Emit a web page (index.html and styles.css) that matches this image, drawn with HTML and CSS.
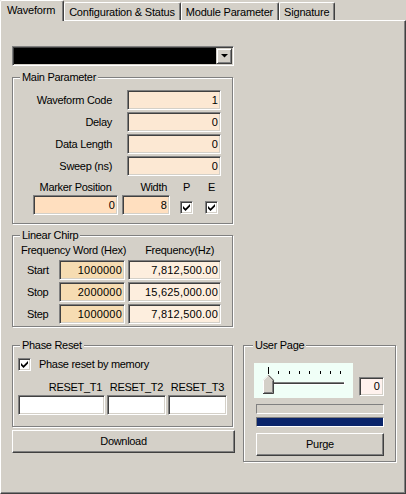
FILE: index.html
```html
<!DOCTYPE html>
<html>
<head>
<meta charset="utf-8">
<link rel="stylesheet" href="styles.css">
</head>
<body>
<div class="tabs">
  <div class="tab active">Waveform</div>
  <div class="tab">Configuration &amp; Status</div>
  <div class="tab">Module Parameter</div>
  <div class="tab">Signature</div>
</div>
<div class="panel">
  <div class="column">
    <div class="combo">
      <div class="combo-btn"><svg width="7" height="4" viewBox="0 0 7 4"><polygon points="0,0 7,0 3.5,3.6" fill="#000"/></svg></div>
    </div>

    <div class="group main">
      <span class="group-title">Main Parameter</span>
      <div class="param-grid">
        <span class="lbl">Waveform Code</span><div class="field f-param">1</div>
        <span class="lbl">Delay</span><div class="field f-param">0</div>
        <span class="lbl">Data Length</span><div class="field f-param">0</div>
        <span class="lbl">Sweep (ns)</span><div class="field f-param">0</div>
      </div>
      <div class="marker-grid">
        <span class="mk-lbl">Marker Position</span>
        <span class="w-lbl">Width</span>
        <span class="cb-lbl">P</span>
        <span class="cb-lbl">E</span>
        <div class="field f-marker">0</div>
        <div class="field f-marker w-field">8</div>
        <div class="check cb-cell"><svg width="7" height="7" viewBox="0 0 7 7"><polygon points="0,2 2.5,4.5 7,0 7,2.5 2.5,7 0,4.5" fill="#000"/></svg></div>
        <div class="check cb-cell"><svg width="7" height="7" viewBox="0 0 7 7"><polygon points="0,2 2.5,4.5 7,0 7,2.5 2.5,7 0,4.5" fill="#000"/></svg></div>
      </div>
    </div>

    <div class="group chirp">
      <span class="group-title">Linear Chirp</span>
      <div class="chirp-grid">
        <span class="h-word">Frequency Word (Hex)</span>
        <span class="h-freq">Frequency(Hz)</span>
        <span class="row-lbl">Start</span><div class="field f-word">1000000</div><div class="field f-freq">7,812,500.00</div>
        <span class="row-lbl">Stop</span><div class="field f-word">2000000</div><div class="field f-freq">15,625,000.00</div>
        <span class="row-lbl">Step</span><div class="field f-word">1000000</div><div class="field f-freq">7,812,500.00</div>
      </div>
    </div>
  </div>

  <div class="bottom-row">
    <div class="bottom-left">
      <div class="group phase">
        <span class="group-title">Phase Reset</span>
        <div class="check-row">
          <div class="check"><svg width="7" height="7" viewBox="0 0 7 7"><polygon points="0,2 2.5,4.5 7,0 7,2.5 2.5,7 0,4.5" fill="#000"/></svg></div>
          <span>Phase reset by memory</span>
        </div>
        <div class="reset-grid">
          <span class="r-lbl">RESET_T1</span>
          <span class="r-lbl">RESET_T2</span>
          <span class="r-lbl">RESET_T3</span>
          <div class="field f-white"></div>
          <div class="field f-white"></div>
          <div class="field f-white"></div>
        </div>
      </div>
      <div class="btn download">Download</div>
    </div>

    <div class="group userpage">
      <span class="group-title">User Page</span>
      <div class="slider-row">
        <svg class="slider" width="99" height="35" viewBox="0 0 99 35">
          <rect width="99" height="35" fill="#f0fff7"/>
          <g stroke="#000" stroke-width="1">
            <line x1="14.5" y1="4" x2="14.5" y2="11"/>
            <line x1="24.5" y1="8" x2="24.5" y2="11"/>
            <line x1="35.5" y1="8" x2="35.5" y2="11"/>
            <line x1="45.5" y1="8" x2="45.5" y2="11"/>
            <line x1="55.5" y1="8" x2="55.5" y2="11"/>
            <line x1="66.5" y1="8" x2="66.5" y2="11"/>
            <line x1="76.5" y1="8" x2="76.5" y2="11"/>
            <line x1="86.5" y1="8" x2="86.5" y2="11"/>
          </g>
          <rect x="10" y="19" width="80" height="1" fill="#808080"/>
          <rect x="10" y="20" width="80" height="1" fill="#404040"/>
          <rect x="10" y="21" width="81" height="1" fill="#ffffff"/>
          <rect x="90" y="19" width="1" height="3" fill="#ffffff"/>
          <path d="M9 31 V17 L14.5 11.5 L20 17 V31 Z" fill="#d4d0c8"/>
          <path d="M9.5 30.5 V17.2 L14.5 12.2" stroke="#fff" fill="none"/>
          <path d="M14.5 12.2 L19.5 17.2 V30.5 H9" stroke="#404040" fill="none"/>
          <path d="M18.5 17.6 V29.5 H10" stroke="#808080" fill="none"/>
        </svg>
        <div class="field f-num">0</div>
      </div>
      <div class="progress"></div>
      <div class="progress filled"></div>
      <div class="btn purge">Purge</div>
    </div>
  </div>
</div>
</body>
</html>
```

FILE: styles.css
```css
* { box-sizing: border-box; }
html, body { margin: 0; padding: 0; }
body {
  width: 406px;
  height: 494px;
  overflow: hidden;
  background: #d4d0c8;
  color: #000;
  font-family: "Liberation Sans", Arial, sans-serif;
  font-size: 11px;
  line-height: 13px;
  letter-spacing: -0.3px;
}

/* tabs */
.tabs {
  position: relative;
  z-index: 2;
  display: flex;
  align-items: flex-start;
  height: 20px;
  letter-spacing: -0.2px;
}
.tab {
  margin-top: 2px;
  height: 18px;
  padding: 3px 5px 0 4px;
  border-top: 1px solid #fff;
  border-left: 1px solid #fff;
  border-right: 1px solid #404040;
  box-shadow: inset -1px 0 #808080;
  border-radius: 2px 2px 0 0;
  white-space: nowrap;
  background: #d4d0c8;
}
.tab.active {
  margin-top: 0;
  height: 21px;
  padding: 3px 8px 0 6px;
}

.panel {
  height: 474px;
  border: 1px solid;
  border-color: #fff #404040 #404040 #fff;
  box-shadow: inset -1px -1px #808080;
  padding: 25px 0 0 11px;
}
.column { width: 222px; }

/* combobox */
.combo {
  height: 20px;
  display: flex;
  justify-content: flex-end;
  padding: 1px;
  border: 1px solid;
  border-color: #808080 #fff #fff #808080;
  box-shadow: inset 1px 1px #404040, inset -1px -1px #d4d0c8;
  background: #000;
}
.combo-btn {
  width: 16px;
  height: 16px;
  background: #d4d0c8;
  border: 1px solid;
  border-color: #d4d0c8 #404040 #404040 #d4d0c8;
  box-shadow: inset 1px 1px #fff, inset -1px -1px #808080;
  display: flex;
  align-items: center;
  justify-content: center;
}
.combo-btn svg { display: block; }

/* group boxes */
.group {
  position: relative;
  width: 221px;
  border: 1px solid #808080;
  box-shadow: 1px 1px 0 #fff, inset 1px 1px 0 #fff;
}
.group-title {
  position: absolute;
  top: -7px;
  left: 7px;
  padding: 0 2px;
  background: #d4d0c8;
  line-height: 13px;
  white-space: nowrap;
}

/* sunken fields */
.field {
  height: 20px;
  border: 1px solid;
  border-color: #808080 #fff #fff #808080;
  box-shadow: inset 1px 1px #404040, inset -1px -1px #d4d0c8;
  padding: 0 2px;
  text-align: right;
  line-height: 18px;
  letter-spacing: 0.2px;
  white-space: nowrap;
}
.f-param { background: #fce8d3; }
.f-marker { background: #ffdfbf; }
.f-word { background: #f6dcb2; }
.f-freq { background: #fdeede; }
.f-white { background: #fff; }
.f-num {
  width: 25px;
  height: 19px;
  line-height: 17px;
  padding-right: 3px;
  background: #fff2ee;
  margin: 0 0 2px 6px;
}

.check {
  width: 13px;
  height: 13px;
  border: 1px solid;
  border-color: #808080 #fff #fff #808080;
  box-shadow: inset 1px 1px #404040, inset -1px -1px #d4d0c8;
  background: #fff;
  display: flex;
  align-items: center;
  justify-content: center;
}
.check svg { display: block; }

/* Main Parameter */
.main {
  margin-top: 11px;
  height: 147px;
  padding-top: 12px;
}
.param-grid {
  display: grid;
  grid-template-columns: 99px 94px;
  column-gap: 15px;
  row-gap: 2px;
  align-items: center;
}
.lbl { text-align: right; white-space: nowrap; }

.marker-grid {
  margin: 5px 0 0 20px;
  display: grid;
  grid-template-columns: 85px 52px 23px 25px;
  grid-template-rows: 13px 20px;
  row-gap: 1px;
}
.mk-lbl { text-align: center; white-space: nowrap; }
.w-lbl { text-align: right; padding-right: 3px; }
.cb-lbl { justify-self: end; width: 13px; text-align: center; }
.w-field { width: 48px; justify-self: end; }
.cb-cell { justify-self: end; align-self: end; margin-bottom: 1px; }

/* Linear Chirp */
.chirp {
  margin-top: 11px;
  height: 92px;
  padding-top: 8px;
}
.chirp-grid {
  display: grid;
  grid-template-columns: 43px 66px 93px;
  grid-template-rows: 14px 20px 20px 20px;
  column-gap: 3px;
  row-gap: 2px;
  align-items: center;
}
.h-word { grid-column: 1 / 3; padding-left: 8px; align-self: start; white-space: nowrap; }
.h-freq { text-align: right; padding-right: 7px; align-self: start; white-space: nowrap; }
.row-lbl { padding-left: 14px; }

/* bottom row */
.bottom-row {
  display: flex;
  align-items: flex-start;
  column-gap: 8px;
  margin-top: 18px;
}
.bottom-left { width: 223px; }
.phase {
  height: 82px;
  padding-top: 12px;
}
.check-row {
  display: flex;
  align-items: center;
  column-gap: 8px;
  margin-left: 5px;
  white-space: nowrap;
}
.reset-grid {
  margin: 10px 0 0 5px;
  display: grid;
  grid-template-columns: 87px 59px 59px;
  grid-template-rows: 13px 20px;
  column-gap: 2px;
  row-gap: 1px;
}
.r-lbl { text-align: right; padding-right: 3px; }

.btn {
  height: 23px;
  border: 1px solid;
  border-color: #fff #404040 #404040 #fff;
  box-shadow: inset -1px -1px #808080;
  text-align: center;
  line-height: 21px;
}
.download { margin-top: 3px; width: 223px; }

/* User Page */
.userpage {
  width: 153px;
  height: 117px;
  padding-top: 17px;
}
.userpage .group-title { left: 9px; }
.slider-row {
  display: flex;
  align-items: flex-end;
  margin-left: 10px;
}
.slider { display: block; }
.progress {
  margin: 6px 0 0 12px;
  width: 128px;
  height: 10px;
  border: 1px solid;
  border-color: #808080 #fff #fff #808080;
}
.progress.filled {
  margin-top: 3px;
  background: #0a246a;
}
.purge {
  margin: 6px 0 0 12px;
  width: 128px;
}
```
